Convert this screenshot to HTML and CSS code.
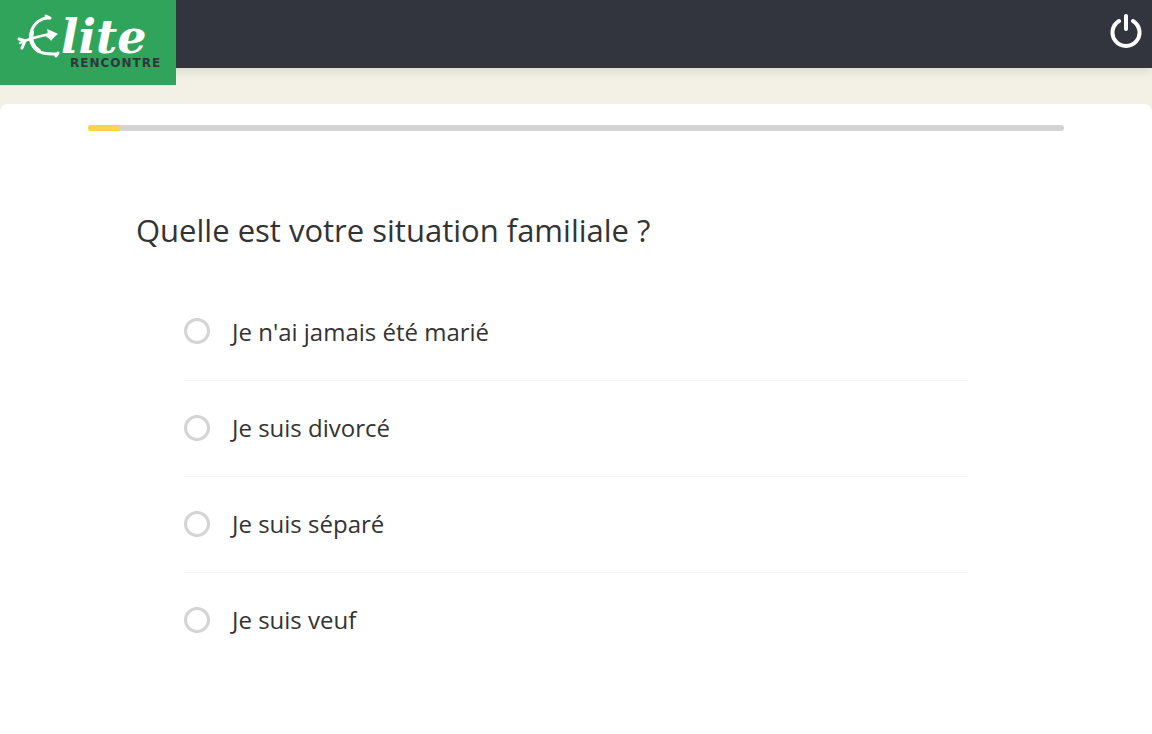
FILE: index.html
```
<!DOCTYPE html>
<html lang="fr">
<head>
  <meta charset="utf-8">
  <meta name="viewport" content="width=device-width, initial-scale=1">
  <title>Elite Rencontre</title>
  <link rel="stylesheet" href="styles.css">
</head>
<body>
  <header class="topbar">
    <a href="#" class="logo" aria-label="Elite Rencontre">
      <svg viewBox="0 0 176 85">
        <!-- bow -->
        <g fill="none" stroke="#fff" stroke-linecap="round" stroke-linejoin="round">
          <path stroke-width="3" d="M49 18C42 17 34 23 31.500 31C28 42 34 51 43 53C48 54 53 54 57 54"/>
          <path stroke-width="4" d="M32 32C30 40 33 47 39 51"/>
          <path stroke-width="3" d="M46 16L50 18M56 56L58 53"/>
          <!-- arrow -->
          <path stroke-width="2.500" d="M20 43C30 38 40 36 50 34"/>
          <path stroke-width="3" d="M25 41L19 39M25 41L22 48"/>
        </g>
        <path fill="#fff" d="M47 29C51 31 55 32 58 34C55 36 53 38 51 41C50 39 49 38 46 37C48 34 48 32 47 29Z"/>
        <text class="logo-name" x="61" y="53">lite</text>
        <text class="logo-sub" x="70" y="67">RENCONTRE</text>
      </svg>
    </a>
    <button class="logout" type="button" aria-label="Déconnexion">
      <svg viewBox="0 0 32 36" fill="none" stroke="#fff" stroke-width="4" stroke-linecap="round">
        <path d="M16 3V16"/>
        <path d="M9 8A13.500 13.500 0 1 0 23 8"/>
      </svg>
    </button>
  </header>

  <main class="card">
    <progress class="progress" value="33" max="1000" aria-label="Progression"></progress>
    <form class="question">
      <h1 id="question-title">Quelle est votre situation familiale ?</h1>
      <div class="options" role="radiogroup" aria-labelledby="question-title">
        <label class="option"><input type="radio" name="situation" value="single">Je n'ai jamais été marié</label>
        <label class="option"><input type="radio" name="situation" value="divorced">Je suis divorcé</label>
        <label class="option"><input type="radio" name="situation" value="separated">Je suis séparé</label>
        <label class="option"><input type="radio" name="situation" value="widowed">Je suis veuf</label>
      </div>
    </form>
  </main>
</body>
</html>
```
FILE: styles.css
```
* {
  box-sizing: border-box;
}
body {
  display: flex;
  flex-direction: column;
  min-height: 100vh;
  margin: 0;
  background: #f3f1e5;
  color: #333;
  font-family: "Open Sans", "Noto Sans", sans-serif;
}

.topbar {
  display: flex;
  align-items: flex-start;
  justify-content: space-between;
  height: 68px;
  padding-right: 10px;
  background: #32353e;
  box-shadow: 0 2px 12px rgba(0, 0, 0, 0.12);
}
.logo {
  width: 176px;
  height: 85px;
  background: #30a45b;
}
.logo svg {
  display: block;
}
.logo-name {
  fill: #fff;
  font: italic bold 46px "DejaVu Serif", serif;
}
.logo-sub {
  fill: #32353e;
  font: bold 12px "DejaVu Sans", sans-serif;
  letter-spacing: 1px;
}
.logout {
  margin: 13px 0 0;
  padding: 0;
  border: none;
  background: none;
  cursor: pointer;
}
.logout svg {
  display: block;
  width: 32px;
  height: 36px;
}

.card {
  flex: 1;
  margin-top: 36px;
  padding: 21px 88px 66px;
  border-radius: 8px 8px 0 0;
  background: #fff;
}
.progress {
  display: block;
  width: 100%;
  height: 6px;
  border: none;
  border-radius: 3px;
  overflow: hidden;
  appearance: none;
  background: #d4d4d4;
}
.progress::-webkit-progress-bar {
  background: #d4d4d4;
}
.progress::-webkit-progress-value {
  background: #fdd34e;
}

.question {
  padding: 78px 48px 0;
}
h1 {
  margin: 0;
  font-size: 31px;
  font-weight: 400;
  line-height: 42px;
}
.options {
  margin: 33px 48px 0;
}
.option {
  display: flex;
  align-items: center;
  height: 96px;
  padding-bottom: 2px;
  font-size: 24px;
  cursor: pointer;
}
.option + .option {
  border-top: 1px solid #f6f6f6;
}
.option input {
  width: 26px;
  height: 26px;
  margin: 0 22px 0 0;
  border: 3px solid #d4d4d4;
  border-radius: 50%;
  appearance: none;
  background: #fff;
}
.option input:checked {
  border-color: #30a45b;
}
```
